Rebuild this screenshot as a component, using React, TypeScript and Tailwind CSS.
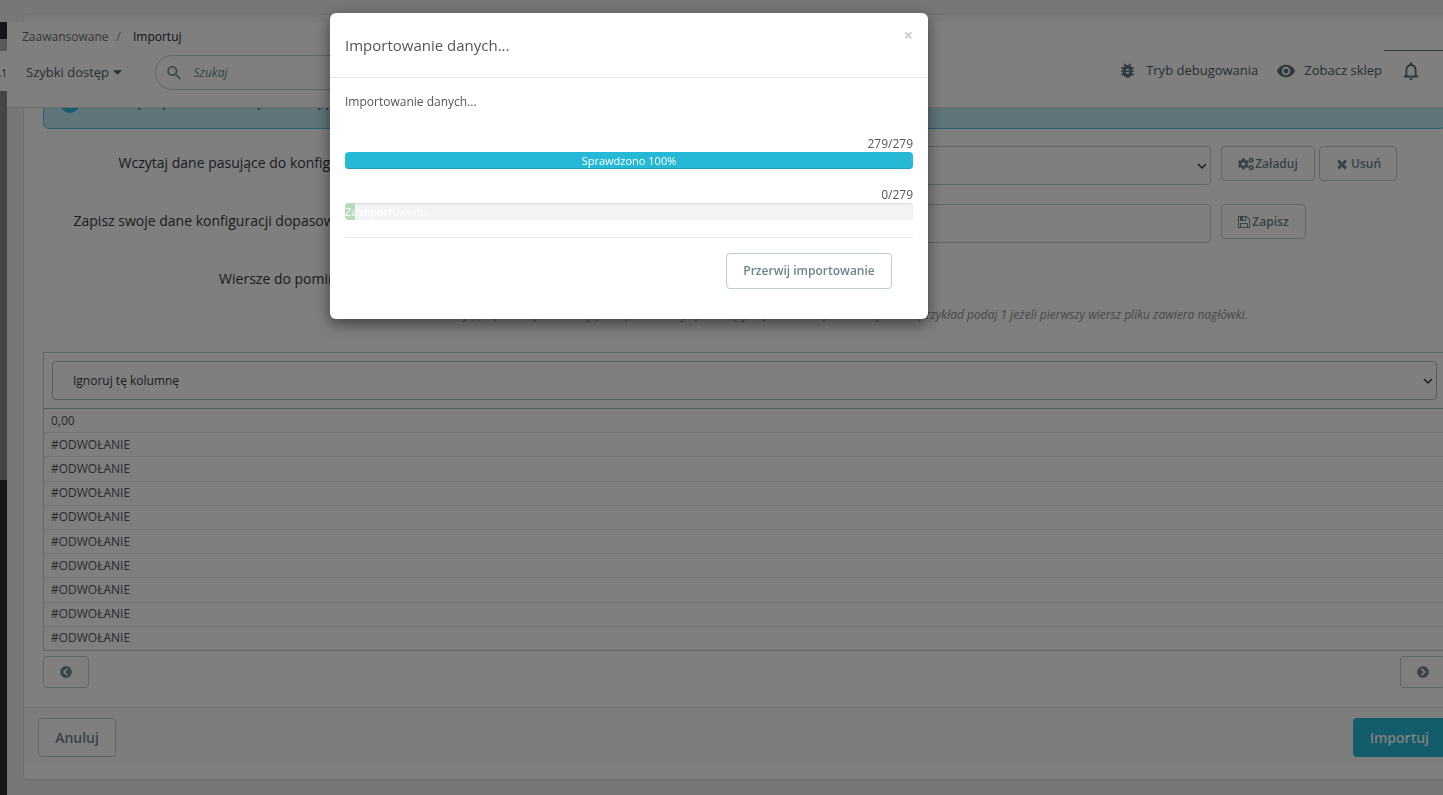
import { FaChevronCircleLeft, FaChevronCircleRight, FaCogs } from "react-icons/fa";
import { MdBugReport, MdNotificationsNone, MdSearch, MdVisibility } from "react-icons/md";

const rows = ["0,00", ...Array.from({ length: 9 }, () => "#ODWOŁANIE")];

const outlineButton =
  "flex items-center justify-center rounded border border-[#bbcdd2] bg-white font-semibold text-[#6c868e]";

function TimesIcon() {
  return (
    <svg viewBox="0 0 1792 1792" className="size-[14px]" fill="currentColor" aria-hidden="true">
      <path d="M1490 1322q0 40-28 68l-136 136q-28 28-68 28t-68-28l-294-294-294 294q-28 28-68 28t-68-28l-136-136q-28-28-28-68t28-68l294-294-294-294q-28-28-28-68t28-68l136-136q28-28 68-28t68 28l294 294 294-294q28-28 68-28t68 28l136 136q28 28 28 68t-28 68l-294 294 294 294q28 28 28 68z" />
    </svg>
  );
}

function FloppyIcon() {
  return (
    <svg viewBox="128 128 1536 1536" className="size-3" fill="currentColor" aria-hidden="true">
      <path d="M512 1536h768v-384h-768v384zm896 0h128v-896q0-14-10-38.5t-20-34.5l-281-281q-10-10-34-20t-39-10v416q0 40-28 68t-68 28h-576q-40 0-68-28t-28-68v-416h-128v1280h128v-416q0-40 28-68t68-28h832q40 0 68 28t28 68v416zm-384-928v-320q0-13-9.5-22.5t-22.5-9.5h-192q-13 0-22.5 9.5t-9.5 22.5v320q0 13 9.5 22.5t22.5 9.5h192q13 0 22.5-9.5t9.5-22.5zm640 32v928q0 40-28 68t-68 28h-1344q-40 0-68-28t-28-68v-1344q0-40 28-68t68-28h928q40 0 88 20t76 48l280 280q28 28 48 76t20 88z" />
    </svg>
  );
}

function Chevron() {
  return (
    <svg
      viewBox="0 0 10 10"
      className="pointer-events-none absolute right-1 top-1/2 size-[10px] -translate-y-1/2"
      fill="none"
      stroke="#363a41"
      strokeWidth="1.5"
      aria-hidden="true"
    >
      <path d="M1 3l4 4 4-4" />
    </svg>
  );
}

function SideStrip() {
  return (
    <aside className="flex w-[7px] shrink-0 flex-col overflow-hidden bg-[#2c2d33]">
      <div className="h-[22px] bg-[#eceef1]" />
      <div className="h-[17px] bg-[#282a30]" />
      <div className="h-3 bg-[#b4b4b6]" />
      <div className="flex h-10 items-center justify-end bg-white pt-1 text-[10px] text-[#363a41]">.1</div>
      <div className="h-[389px] bg-[#8a8b8e]" />
    </aside>
  );
}

function Header() {
  return (
    <header className="relative z-10 h-[86px] border-b border-[#d3d8db] bg-white">
      <nav className="flex h-[29px] items-center gap-2 pl-[15px] text-[12px]" aria-label="Ścieżka">
        <a href="#zaawansowane" className="text-[#6c7078]">Zaawansowane</a>
        <span className="text-[#8a8a70]">/</span>
        <a href="#importuj" className="pl-1 text-[#25282d]">Importuj</a>
      </nav>
      <div className="flex items-center pl-[19px] pt-1 text-[13px] text-[#4e6167]">
        <button type="button" className="flex w-[129px] items-center gap-1">
          Szybki dostęp
          <svg viewBox="0 0 8 4" className="h-[5px] w-[9px]" fill="currentColor" aria-hidden="true">
            <path d="M0 0h8L4 4z" />
          </svg>
        </button>
        <label className="flex h-[35px] w-[400px] items-center gap-[10px] rounded-full border border-[#bbcdd2] pl-[9px]">
          <MdSearch className="size-5 text-[#6c868e]" aria-hidden="true" />
          <input
            type="search"
            aria-label="Szukaj"
            placeholder="Szukaj"
            className="w-full bg-transparent text-[12px] italic outline-none placeholder:text-[#6c868e]"
          />
        </label>
        <div className="ml-auto flex items-center pb-1 pr-[21px]">
          <a href="#debug" className="flex items-center gap-[9px]">
            <MdBugReport className="size-[19px] text-[#5d757c]" aria-hidden="true" />
            Tryb debugowania
          </a>
          <a href="#sklep" className="ml-[18px] flex items-center gap-2">
            <MdVisibility className="size-5 text-[#5d757c]" aria-hidden="true" />
            Zobacz sklep
          </a>
          <button type="button" aria-label="Powiadomienia" className="ml-[18px]">
            <MdNotificationsNone className="size-[22px] text-[#5d757c]" aria-hidden="true" />
          </button>
        </div>
      </div>
      <div className="absolute right-0 top-7 h-px w-[59px] bg-[#5d757c]" />
    </header>
  );
}

function ImportForm() {
  return (
    <form className="grid grid-cols-[334px_834px_1fr] gap-y-[19px] pt-[17px] text-[14px] text-[#363a41]">
      <label htmlFor="config" className="h-[39px] pr-[11px] pt-[6px] text-right">Wczytaj dane pasujące do konfiguracji</label>
      <div className="relative ml-3 flex">
        <select id="config" className="w-full appearance-none rounded border border-[#bbcdd2] bg-white px-4 text-[12px]" />
        <Chevron />
      </div>
      <div className="flex gap-1 pl-[10px] text-[12px]">
        <button type="button" className={`${outlineButton} h-[35px] w-[94px] gap-px`}>
          <FaCogs className="size-4" aria-hidden="true" />
          Załaduj
        </button>
        <button type="button" className={`${outlineButton} h-[35px] w-[78px] gap-[2px]`}>
          <TimesIcon />
          Usuń
        </button>
      </div>
      <label htmlFor="save" className="h-[39px] whitespace-nowrap pr-[11px] pt-[6px] text-right">Zapisz swoje dane konfiguracji dopasowania:</label>
      <input id="save" type="text" className="ml-3 rounded border border-[#bbcdd2] bg-white px-4 text-[12px]" />
      <div className="pl-[10px] text-[12px]">
        <button type="button" className={`${outlineButton} h-[35px] w-[85px] gap-[2px]`}>
          <FloppyIcon />
          Zapisz
        </button>
      </div>
      <label htmlFor="skip" className="pr-[11px] pt-[6px] text-right">Wiersze do pominięcia</label>
      <div className="col-span-2 ml-3">
        <input id="skip" type="text" defaultValue="0" className="h-[39px] w-[300px] rounded border border-[#bbcdd2] px-4 text-[12px]" />
        <p className="mt-[5px] h-[18px] whitespace-nowrap text-[12px] italic leading-[18px] text-[#8f9294]">
          Liczba wskazuje, ile pierwszych wierszy pliku powinno być pominiętych podczas importu danych. Na przykład podaj 1 jeżeli pierwszy wiersz pliku zawiera nagłówki.
        </p>
      </div>
    </form>
  );
}

function DataTable() {
  return (
    <table className="mt-7 h-[299px] w-full border-collapse border border-[#bbcdd2] text-[12px] text-[#54575c]">
      <thead>
        <tr>
          <th className="h-14 border-b border-[#9fb4ba] px-2 py-0 font-normal">
            <div className="relative flex h-[39px]">
              <select
                aria-label="Typ kolumny"
                className="w-full appearance-none rounded border border-[#a9bdc3] bg-white px-5 text-[12px] text-[#363a41]"
              >
                <option>Ignoruj tę kolumnę</option>
              </select>
              <Chevron />
            </div>
          </th>
        </tr>
      </thead>
      <tbody>
        {rows.map((value, index) => (
          <tr key={index} className="border-b border-[#e6eaec] last:border-[#bbcdd2]">
            <td className="h-6 px-[7px] py-0 leading-[22px]">{value}</td>
          </tr>
        ))}
      </tbody>
    </table>
  );
}

function ImportDialog() {
  return (
    <div className="fixed inset-0 z-20 bg-black/50">
      <div
        role="dialog"
        aria-modal="true"
        aria-labelledby="dialog-title"
        className="ml-[330px] mt-[13px] w-[598px] rounded-md bg-white text-[12px] text-[#555] shadow-[0_5px_15px_rgba(0,0,0,0.5)]"
      >
        <div className="flex h-[65px] items-center justify-between border-b border-[#e5e5e5] px-[15px]">
          <h2 id="dialog-title" className="text-[15px]">Importowanie danych...</h2>
          <button type="button" aria-label="Zamknij" className="mb-5 text-[16px] font-bold leading-5 text-[#ccc]">×</button>
        </div>
        <div className="px-[15px] pb-[30px] pt-[15px]">
          <p className="leading-[18px]">Importowanie danych...</p>
          <p className="mt-6 text-right leading-[17px]">279/279</p>
          <div className="h-[17px] rounded border-b border-[#1f9db7] bg-[#25b9d7] text-center text-[11px] leading-[17px] text-white">
            Sprawdzono 100%
          </div>
          <p className="mt-[17px] text-right leading-[17px]">0/279</p>
          <div className="relative h-[17px] overflow-hidden rounded bg-[#f3f3f3] text-[11px] leading-[17px] text-white shadow-[inset_0_1px_2px_rgba(0,0,0,0.1)]">
            <div className="h-full w-[10px] bg-[#b5dcb8]" />
            <span className="absolute left-0 top-0">Zaimportowano</span>
            <span className="absolute left-3 top-0">import</span>
          </div>
          <div className="mt-[17px] flex justify-end border-t border-[#e5e5e5] pr-[21px] pt-[15px]">
            <button type="button" className={`${outlineButton} h-9 w-[166px]`}>Przerwij importowanie</button>
          </div>
        </div>
      </div>
    </div>
  );
}

export default function App() {
  return (
    <div className="flex h-screen overflow-hidden bg-[#eceef1] font-['Open_Sans',sans-serif]">
      <SideStrip />
      <div className="min-w-0 flex-1 overflow-hidden">
        <div className="h-[22px] pl-4 pt-[14px]">
          <div className="h-2 rounded-tl border-l border-t border-[#dfe3e6] bg-[#f4f5f6]" />
        </div>
        <Header />
        <main className="-mr-5 overflow-hidden pl-4">
          <section className="rounded-b border border-t-0 border-[#dfe3e6] bg-white">
            <div className="-mt-8 ml-[19px] mr-4 flex h-[53px] items-center gap-[18px] rounded-md border border-[#4ac7e0] bg-[#beeaf3] pl-4 text-[14px] text-[#363a41]">
              <span className="size-5 shrink-0 rounded-full bg-[#25b9d7]" />
              <p className="pb-1">Proszę dopasować każdą kolumnę pliku źródłowego do jednej z kolumn docelowych.</p>
            </div>
            <div className="ml-[19px] mr-4">
              <ImportForm />
              <DataTable />
              <div className="flex justify-between pb-[19px] pt-[5px] text-[14px]">
                <button type="button" aria-label="Poprzednie" className={`${outlineButton} h-8 w-[46px]`}>
                  <FaChevronCircleLeft className="size-3" aria-hidden="true" />
                </button>
                <button type="button" aria-label="Następne" className={`${outlineButton} h-8 w-[46px]`}>
                  <FaChevronCircleRight className="size-3" aria-hidden="true" />
                </button>
              </div>
            </div>
            <footer className="mb-[14px] flex justify-between border-t border-[#dfe3e6] bg-[#fafbfc] pb-2 pl-[14px] pr-4 pt-[10px] text-[14px]">
              <button type="button" className={`${outlineButton} h-[39px] w-[78px]`}>Anuluj</button>
              <button type="submit" className="h-[39px] rounded bg-[#25b9d7] px-[17px] font-semibold text-white">Importuj</button>
            </footer>
          </section>
        </main>
      </div>
      <ImportDialog />
    </div>
  );
}
